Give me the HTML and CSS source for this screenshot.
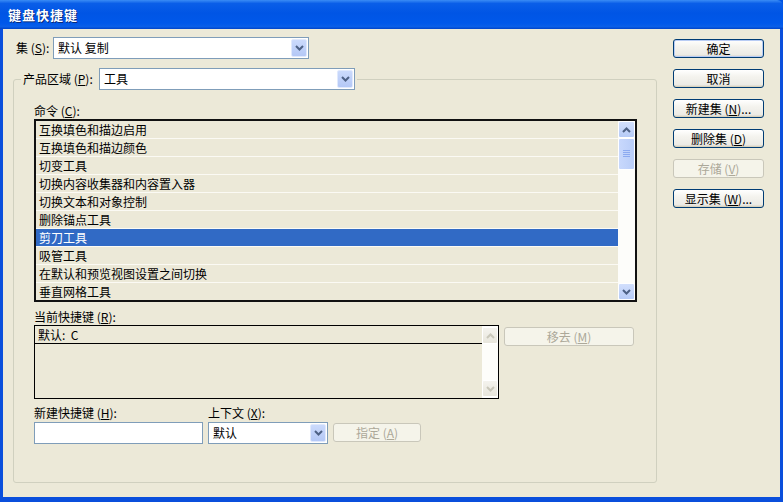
FILE: index.html
```html
<!DOCTYPE html>
<html lang="zh-CN">
<head>
    <meta charset="UTF-8">
    <title>键盘快捷键</title>
    <link rel="stylesheet" href="styles.css">
</head>
<body>
    <div class="window">
        <div class="titlebar">
            <span class="title">键盘快捷键</span>
        </div>

        <div class="client">
            <div class="main">
                <!-- 集 -->
                <div class="set-row">
                    <span class="label set-label">集 (<u>S</u>):</span>
                    <div class="combo combo-set">
                        <span class="combo-text">默认 复制</span>
                        <span class="drop">
                            <svg width="9" height="6" viewBox="0 0 9 6"><path d="M1 1 L4.5 4.5 L8 1" fill="none" stroke="#4d6185" stroke-width="2"/></svg>
                        </span>
                    </div>
                </div>

                <fieldset class="group">
                    <legend class="group-legend">
                        <span class="label legend-label">产品区域 (<u>P</u>):</span>
                        <span class="combo combo-area">
                            <span class="combo-text">工具</span>
                            <span class="drop">
                                <svg width="9" height="6" viewBox="0 0 9 6"><path d="M1 1 L4.5 4.5 L8 1" fill="none" stroke="#4d6185" stroke-width="2"/></svg>
                            </span>
                        </span>
                    </legend>

                    <div class="group-body">
                        <div class="label cmd-label">命令 (<u>C</u>):</div>
                        <div class="listbox command-list">
                            <ul class="rows">
                                <li>互换填色和描边启用</li>
                                <li>互换填色和描边颜色</li>
                                <li>切变工具</li>
                                <li>切换内容收集器和内容置入器</li>
                                <li>切换文本和对象控制</li>
                                <li>删除锚点工具</li>
                                <li class="selected">剪刀工具</li>
                                <li>吸管工具</li>
                                <li>在默认和预览视图设置之间切换</li>
                                <li>垂直网格工具</li>
                            </ul>
                            <div class="vscroll">
                                <span class="sb-btn">
                                    <svg width="9" height="6" viewBox="0 0 9 6"><path d="M1 5 L4.5 1.5 L8 5" fill="none" stroke="#4d6185" stroke-width="2"/></svg>
                                </span>
                                <span class="sb-thumb">
                                    <svg width="7" height="8" viewBox="0 0 7 8"><path d="M0 0.5 H7 M0 2.5 H7 M0 4.5 H7 M0 6.5 H7" stroke="#8caaf0" stroke-width="1"/></svg>
                                </span>
                                <span class="sb-track"></span>
                                <span class="sb-btn">
                                    <svg width="9" height="6" viewBox="0 0 9 6"><path d="M1 1 L4.5 4.5 L8 1" fill="none" stroke="#4d6185" stroke-width="2"/></svg>
                                </span>
                            </div>
                        </div>

                        <div class="label current-label">当前快捷键 (<u>R</u>):</div>
                        <div class="current-row">
                            <div class="listbox current-list">
                                <ul class="rows">
                                    <li class="line-row">默认:&nbsp; C</li>
                                </ul>
                                <div class="vscroll disabled">
                                    <span class="sb-btn">
                                        <svg width="9" height="6" viewBox="0 0 9 6"><path d="M1 5 L4.5 1.5 L8 5" fill="none" stroke="#c9c7ba" stroke-width="2"/></svg>
                                    </span>
                                    <span class="sb-track"></span>
                                    <span class="sb-btn">
                                        <svg width="9" height="6" viewBox="0 0 9 6"><path d="M1 1 L4.5 4.5 L8 1" fill="none" stroke="#c9c7ba" stroke-width="2"/></svg>
                                    </span>
                                </div>
                            </div>
                            <button class="btn disabled remove-btn">移去 (<u>M</u>)</button>
                        </div>

                        <div class="new-row">
                            <div class="field">
                                <div class="label">新建快捷键 (<u>H</u>):</div>
                                <div class="textbox"></div>
                            </div>
                            <div class="field">
                                <div class="label">上下文 (<u>X</u>):</div>
                                <div class="combo combo-ctx">
                                    <span class="combo-text">默认</span>
                                    <span class="drop">
                                        <svg width="9" height="6" viewBox="0 0 9 6"><path d="M1 1 L4.5 4.5 L8 1" fill="none" stroke="#4d6185" stroke-width="2"/></svg>
                                    </span>
                                </div>
                            </div>
                            <button class="btn disabled assign-btn">指定 (<u>A</u>)</button>
                        </div>
                    </div>
                </fieldset>
            </div>

            <div class="side">
                <button class="btn default">确定</button>
                <button class="btn">取消</button>
                <button class="btn">新建集 (<u>N</u>)...</button>
                <button class="btn">删除集 (<u>D</u>)</button>
                <button class="btn disabled">存储 (<u>V</u>)</button>
                <button class="btn">显示集 (<u>W</u>)...</button>
            </div>
        </div>
    </div>
</body>
</html>
```

FILE: styles.css
```css
body, html {
    margin: 0;
    padding: 0;
    font-family: 'Noto Sans CJK SC', 'Noto Sans', sans-serif;
    font-size: 12px;
    color: #000;
}
.window {
    width: 783px;
    height: 502px;
    display: flex;
    flex-direction: column;
    background-color: #0054e3;
    overflow: hidden;
}
.titlebar {
    height: 29px;
    flex: none;
    display: flex;
    align-items: center;
    padding-left: 8px;
    background: linear-gradient(to bottom, #3a8cf5 0%, #0a5ee8 12%, #0055e5 45%, #0058ea 80%, #0a5fe8 92%, #0043c8 100%);
    border-top-right-radius: 6px;
}
.title {
    color: #fff;
    font-weight: bold;
    font-size: 13px;
    letter-spacing: 1px;
    text-shadow: 1px 1px 0 #0a2a7a;
}
.client {
    flex: 1;
    display: flex;
    background-color: #ece9d8;
    border-style: solid;
    border-color: #0a4fdc;
    border-width: 0 3px 5px 3px;
    padding: 8px 16px 14px 10px;
    min-height: 0;
}
.main {
    width: 644px;
    display: flex;
    flex-direction: column;
}
.label {
    line-height: 14px;
    white-space: nowrap;
}
u {
    text-decoration: underline;
    text-underline-offset: 1px;
}

/* combo boxes */
.set-row {
    display: flex;
    align-items: center;
    height: 22px;
}
.set-label {
    width: 40px;
    padding-left: 3px;
    box-sizing: border-box;
}
.combo {
    display: flex;
    align-items: center;
    justify-content: space-between;
    box-sizing: border-box;
    height: 22px;
    border: 1px solid #7f9db9;
    background-color: #fff;
    padding: 1px;
}
.combo-text {
    padding-left: 3px;
    line-height: 18px;
}
.drop {
    width: 16px;
    height: 18px;
    display: flex;
    align-items: center;
    justify-content: center;
    box-sizing: border-box;
    border: 1px solid #e0e9fd;
    border-radius: 2px;
    background: linear-gradient(to bottom, #cbdafc, #b4c8f6);
}
.combo-set {
    width: 256px;
}
.combo-area {
    width: 256px;
}
.combo-ctx {
    width: 120px;
}

/* group box */
.group {
    flex: 1;
    min-width: 0;
    margin: 9px 0 0 0;
    padding: 0;
    border: 1px solid #d0d0bf;
    border-radius: 3px;
}
.group-legend {
    display: flex;
    align-items: center;
    margin-left: 7px;
    padding: 0 2px 0 2px;
}
.legend-label {
    width: 76px;
}
.group-body {
    padding: 14px 0 0 20px;
}
.cmd-label {
    margin-bottom: 1px;
}

/* list boxes */
.listbox {
    display: flex;
    box-sizing: border-box;
    background-color: #ece9d8;
    overflow: hidden;
}
.command-list {
    width: 603px;
    height: 183px;
    border: 2px solid #111;
}
.rows {
    flex: 1;
    list-style: none;
    margin: 0;
    padding: 0;
}
.rows li {
    height: 17px;
    line-height: 17px;
    padding-left: 3px;
    border-bottom: 1px solid #fbfaf4;
    white-space: nowrap;
}
.rows li.selected {
    background-color: #316ac5;
    color: #fff;
}
.rows li.line-row {
    border-bottom: 1px solid #000;
}
.vscroll {
    width: 17px;
    display: flex;
    flex-direction: column;
    background-color: #fdfdfa;
}
.sb-btn {
    height: 17px;
    flex: none;
    display: flex;
    align-items: center;
    justify-content: center;
    box-sizing: border-box;
    border: 1px solid #fff;
    border-radius: 2px;
    background: linear-gradient(to bottom, #d2dffc, #b6cbf7);
}
.sb-thumb {
    height: 32px;
    flex: none;
    display: flex;
    align-items: center;
    justify-content: center;
    box-sizing: border-box;
    border: 1px solid #fff;
    border-radius: 2px;
    background: linear-gradient(to right, #c8d8fc, #b9cdf8);
}
.sb-track {
    flex: 1;
}
.vscroll.disabled .sb-btn {
    border-color: #fff;
    background: linear-gradient(to bottom, #f4f3ee, #e8e6dc);
}

.current-label {
    margin-top: 8px;
    margin-bottom: 1px;
}
.current-row {
    display: flex;
    align-items: flex-start;
}
.current-list {
    width: 465px;
    height: 74px;
    border: 1px solid #000;
}
.current-list .vscroll {
    width: 16px;
    padding: 1px 0;
}
.remove-btn {
    width: 130px;
    margin: 2px 0 0 5px;
}

/* new shortcut */
.new-row {
    display: flex;
    align-items: flex-end;
    margin-top: 7px;
}
.field .label {
    margin-bottom: 2px;
}
.textbox {
    width: 169px;
    height: 22px;
    box-sizing: border-box;
    border: 1px solid #7f9db9;
    background-color: #fff;
    margin-right: 5px;
}
.assign-btn {
    width: 88px;
    margin: 0 0 2px 5px;
}

/* buttons */
.btn {
    height: 19px;
    padding: 0;
    font-family: inherit;
    font-size: 12px;
    line-height: 17px;
    color: #000;
    border: 1px solid #003c74;
    border-radius: 3px;
    background: linear-gradient(to bottom, #ffffff 0%, #f4f3ee 40%, #ecebe6 85%, #d6d0c5 100%);
    box-shadow: inset 0 -1px 0 #d8d2bd;
    white-space: nowrap;
}
.btn.default {
    box-shadow: inset 0 0 0 1px #b8ccf4;
}
.btn.disabled {
    color: #aca899;
    border-color: #c9c7ba;
    background: #f5f4ea;
    box-shadow: none;
}
.side {
    width: 91px;
    margin-left: 16px;
    padding-top: 2px;
    display: flex;
    flex-direction: column;
    gap: 11px;
}
```
